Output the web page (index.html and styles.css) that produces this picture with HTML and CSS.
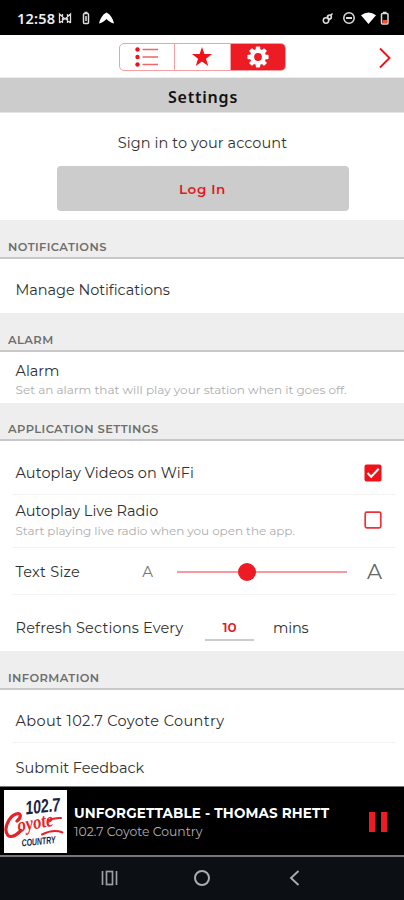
FILE: index.html
```
<!DOCTYPE html>
<html lang="en">
<head>
<meta charset="utf-8">
<title>Settings</title>
<link rel="stylesheet" href="styles.css">
</head>
<body>
<div class="phone">
  <div class="status">
    <span class="time">12:58</span>
    <svg class="status-left" width="60" height="16" viewBox="0 0 60 16" fill="none" stroke="#ddd" stroke-width="1.5">
      <path d="M2.500 13V4L8 9l5.500-5v9M2.500 13L7 9M13.500 13L9 9M5.500 4v9M10.500 4v9" stroke-width="1.300"/>
      <rect x="26.500" y="3.500" width="5" height="10" rx="1"/><path d="M27.500 2.500h3M29 6v5"/>
      <path d="M42 13.500c1-5 3.500-9 7.500-11 4 2 6.500 6 7.500 11-2.500-.5-5-2-7.500-4.500-2.500 2.500-5 4-7.500 4.500z" fill="#fff" stroke="none"/>
    </svg>
    <svg class="status-right" width="70" height="16" viewBox="0 0 70 16" fill="none" stroke="#ddd" stroke-width="1.500">
      <circle cx="6" cy="10.500" r="2.700"/><circle cx="9.500" cy="7" r="1.900"/><path d="M10 6l2.500-2.500M7 7l1.500-1.500M9 10l2-2"/>
      <circle cx="29" cy="8" r="5.200"/><path d="M26 8h6" stroke-width="2"/>
      <path d="M41 5.200q7.500-5.500 15 0L48.500 14z" fill="#fff" stroke="none"/>
      <rect x="61.500" y="3.500" width="6.500" height="10.500" rx="1"/><path d="M63 2.500h3.500"/><path d="M62.500 11.500h4.500" stroke="#f4512c" stroke-width="3"/>
    </svg>
  </div>
  <div class="toolbar">
    <div class="tabs">
      <div class="tab"><svg width="26" height="22" viewBox="0 0 26 22"><g fill="#ed1319"><circle cx="3.500" cy="3.500" r="2.200"/><circle cx="3.500" cy="11" r="2.200"/><circle cx="3.500" cy="18.500" r="2.200"/></g><path d="M8.500 3.500H24M8.500 11H24M8.500 18.500H24" stroke="#f0666a" stroke-width="1.300"/></svg></div>
      <div class="tab"><svg width="22" height="22" viewBox="0 0 22 22"><path fill="#ed1319" d="M11 1l2.400 7.100H21l-6 4.600 2.200 7.300-6.200-4.400L4.800 20 7 12.700 1 8.100h7.600z"/></svg></div>
      <div class="tab active"><svg width="22" height="22" viewBox="-11 -11 22 22"><g fill="#fff"><circle r="8"/><g id="tooth"><rect x="-2.200" y="-10.600" width="4.400" height="21.200" rx="1"/><rect x="-10.600" y="-2.200" width="21.200" height="4.400" rx="1"/></g><use href="#tooth" transform="rotate(45)"/></g><circle r="3.900" fill="#ed1c24"/></svg></div>
    </div>
    <svg class="next" width="14" height="22" viewBox="0 0 14 22" fill="none" stroke="#ed1319" stroke-width="1.900"><path d="M2 1.500l9.500 9.500L2 20.500"/></svg>
  </div>
  <h1 class="title">Settings</h1>
  <div class="account"><p class="signin">Sign in to your account</p><div class="login"><span>Log In</span></div></div>

  <h2 class="section notif"><span>NOTIFICATIONS</span></h2>
  <div class="row manage"><span class="label l-manage">Manage Notifications</span></div>

  <h2 class="section alarm-head"><span>ALARM</span></h2>
  <div class="row alarm"><span class="label l-alarm">Alarm</span><span class="hint h-alarm">Set an alarm that will play your station when it goes off.</span></div>

  <h2 class="section app-head"><span>APPLICATION SETTINGS</span></h2>
  <div class="row videos divided"><span class="label l-videos">Autoplay Videos on WiFi</span>
    <svg class="check" width="18" height="18" viewBox="0 0 18 18"><rect x=".5" y=".5" width="17" height="17" rx="2" fill="#ed1319"/><path d="M3.500 9l3.700 3.800 7.500-8" fill="none" stroke="#fff" stroke-width="2"/></svg></div>
  <div class="row radio divided"><div class="stack"><span class="label l-radio">Autoplay Live Radio</span><span class="hint h-radio">Start playing live radio when you open the app.</span></div>
    <svg class="check" width="18" height="18" viewBox="0 0 18 18"><rect x="1.200" y="1.200" width="15.600" height="15.600" rx="1.500" fill="#fff" stroke="#ee3338" stroke-width="1.700"/></svg></div>
  <div class="row size divided"><span class="label l-size">Text Size</span><span class="a-small">A</span>
    <div class="slider"><div class="knob"></div></div><span class="a-big">A</span></div>
  <div class="row refresh"><span class="label l-refresh">Refresh Sections Every</span><span class="number">10</span><span class="label l-mins">mins</span></div>

  <h2 class="section info-head"><span>INFORMATION</span></h2>
  <div class="row about divided"><span class="label l-about">About 102.7 Coyote Country</span></div>
  <div class="row feedback"><span class="label l-feedback">Submit Feedback</span></div>

  <div class="player">
    <svg class="logo" width="63" height="63" viewBox="0 0 63 63">
      <rect width="63" height="63" fill="#fff"/>
      <g fill="none" stroke="#e52328" stroke-linecap="round"><path d="M13 31c5-4 4-9-1-7C4 27-1 40 4 45.500c4 3 9-1 13-5" stroke-width="3.200"/><path d="M44 30.500c5-2.500 8-3 13-2.500" stroke-width="2"/><path d="M38 44.500c8-4 14-4.500 20.500-2" stroke-width="2"/></g>
      <text class="freq" transform="translate(22 24.500) rotate(-6)" textLength="35" lengthAdjust="spacingAndGlyphs">102.7</text>
      <text class="coyote" transform="translate(14.500 42) rotate(-10)" textLength="36" lengthAdjust="spacingAndGlyphs">oyote</text>
      <text class="country" transform="translate(18 56.500) rotate(-6)" textLength="34" lengthAdjust="spacingAndGlyphs">COUNTRY</text>
    </svg>
    <div class="track"><span class="song">UNFORGETTABLE - THOMAS RHETT</span><span class="station">102.7 Coyote Country</span></div>
    <div class="pause"></div>
  </div>
  <div class="nav">
    <svg width="17" height="16" viewBox="0 0 17 16" fill="none" stroke="#9c9fa3" stroke-width="1.700"><path d="M1.500 1v14M15.500 1v14"/><rect x="5.500" y="1.500" width="6" height="13"/></svg>
    <svg class="home" width="18" height="18" viewBox="0 0 18 18" fill="none" stroke="#aaacb0" stroke-width="2"><circle cx="9" cy="9" r="7"/></svg>
    <svg width="11" height="16" viewBox="0 0 11 16" fill="none" stroke="#aaacb0" stroke-width="1.900"><path d="M9.500 1L2 8l7.500 7"/></svg>
  </div>
</div>
</body>
</html>
```
FILE: styles.css
```
* { box-sizing: border-box; margin: 0; }
body { background: #fff; color: #303030; font-family: Montserrat, Inter, sans-serif; }
.phone { width: 404px; height: 900px; display: flex; flex-direction: column; overflow: hidden; }
.phone > * { flex: none; }
span { white-space: nowrap; }
.status { height: 35px; background: #000; display: flex; align-items: center; padding: 1px 14px 0 17px; }
.time { color: #eee; font: 600 14.500px "Noto Sans", sans-serif; letter-spacing: .2px; width: 40px; }
.status-right { margin-left: auto; }
.toolbar { height: 43px; display: flex; align-items: center; padding: 0 12px 0 119px; border-bottom: 1px solid #eee; }
.tabs { display: flex; width: 167px; height: 28px; border: 1px solid #f5a0a2; border-radius: 5px; overflow: hidden; margin-top: 2px; }
.tab { flex: 1; display: flex; align-items: center; justify-content: center; border-right: 1px solid #f5a0a2; }
.tab.active { background: #ed1c24; border: 0; }
.next { margin-left: auto; margin-top: 4px; }
.title { height: 35px; background: #ccc; border-bottom: 1px solid #e4e4e4; color: #111; text-align: center; padding-left: 2px; font: 600 16px/38px "Noto Sans", sans-serif; letter-spacing: .8px; }
.account { height: 107px; display: flex; flex-direction: column; align-items: center; padding: 20px 0 0 1px; }
.signin { font-size: 14.500px; line-height: 20px; letter-spacing: .08px; height: 33px; color: #333; }
.login { width: 292px; height: 45px; border-radius: 4px; background: #ccc; color: #e3191e; display: grid; place-items: center; font-weight: 600; font-size: 13.500px; letter-spacing: .6px; }
.section { background: #eee; border-bottom: 2px solid #c8c8c8; height: 39px; padding: 0 8px 2px; display: flex; align-items: flex-end; font-size: 11.500px; line-height: 16px; font-weight: 600; color: #6e6e6e; letter-spacing: .4px; }
.app-head { height: 38px; padding-bottom: 2px; }
.row { display: flex; align-items: center; padding: 0 22px 0 15.500px; }
.label { font-size: 14.500px; line-height: 20px; letter-spacing: .1px; }
.hint { font-size: 12px; line-height: 16px; letter-spacing: 0; color: #adadad; }
.l-manage { letter-spacing: -.05px; }
.l-alarm, .l-radio, .l-feedback { letter-spacing: 0; }
.l-refresh { letter-spacing: .16px; }
.l-about { letter-spacing: .38px; }
.h-radio { letter-spacing: -.05px; }
.divided { background: linear-gradient(#f3f3f3, #f3f3f3) 12px 100% / 384px 1px no-repeat; }
.manage { height: 54px; padding-top: 8px; }
.alarm { height: 51px; flex-direction: column; align-items: flex-start; padding-top: 9px; }
.alarm .hint { margin-top: 1px; }
.videos { height: 54px; padding-top: 9px; }
.radio { height: 53px; padding-bottom: 4px; }
.stack { display: flex; flex-direction: column; }
.stack .hint { margin-top: 2px; }
.check { margin-left: auto; }
.size { height: 47px; }
.l-size { width: 127px; letter-spacing: .25px; }
.a-small { width: 35px; font-size: 15px; color: #777; }
.slider { width: 170px; height: 2px; background: #f69a9d; display: flex; align-items: center; }
.knob { width: 18px; height: 18px; border-radius: 50%; background: #ed1c24; margin-left: 61px; }
.a-big { margin-left: 20px; font-size: 21px; color: #666; }
.refresh { height: 56px; padding-top: 10px; }
.l-refresh { width: 189.500px; }
.number { width: 49px; height: 26px; border-bottom: 2px solid #ccc; text-align: center; color: #e3191e; font-weight: 600; font-size: 13.500px; line-height: 24px; }
.l-mins { margin-left: 19px; letter-spacing: -.2px; }
.about { height: 53px; padding-top: 9px; }
.feedback { height: 43px; padding-top: 7px; }
.player { height: 71px; background: #000; border-top: 1px solid #777; border-bottom: 2px solid #777; display: flex; align-items: center; padding: 0 17px 0 4px; }
.track { margin-left: 7px; padding-top: 2px; display: flex; flex-direction: column; }
.song { color: #fff; font-size: 13.500px; line-height: 19px; font-weight: 700; letter-spacing: .15px; }
.station { color: #b0b0b0; font-size: 12.400px; line-height: 18px; }
.pause { margin-left: auto; width: 18px; height: 20px; border: solid #ed1c24; border-width: 0 6px; margin-top: 1px; }
.freq { font: italic 700 19px "Liberation Sans", sans-serif; fill: #17234b; }
.coyote { font: italic 700 20px "Liberation Serif", serif; fill: #e52328; }
.country { font: italic 700 10px "Liberation Sans", sans-serif; fill: #17234b; }
.nav { height: 43px; background: #0c0f14; display: flex; align-items: center; padding: 0 104px 2px 101px; justify-content: space-between; }
.home { margin-right: 3px; }
```
